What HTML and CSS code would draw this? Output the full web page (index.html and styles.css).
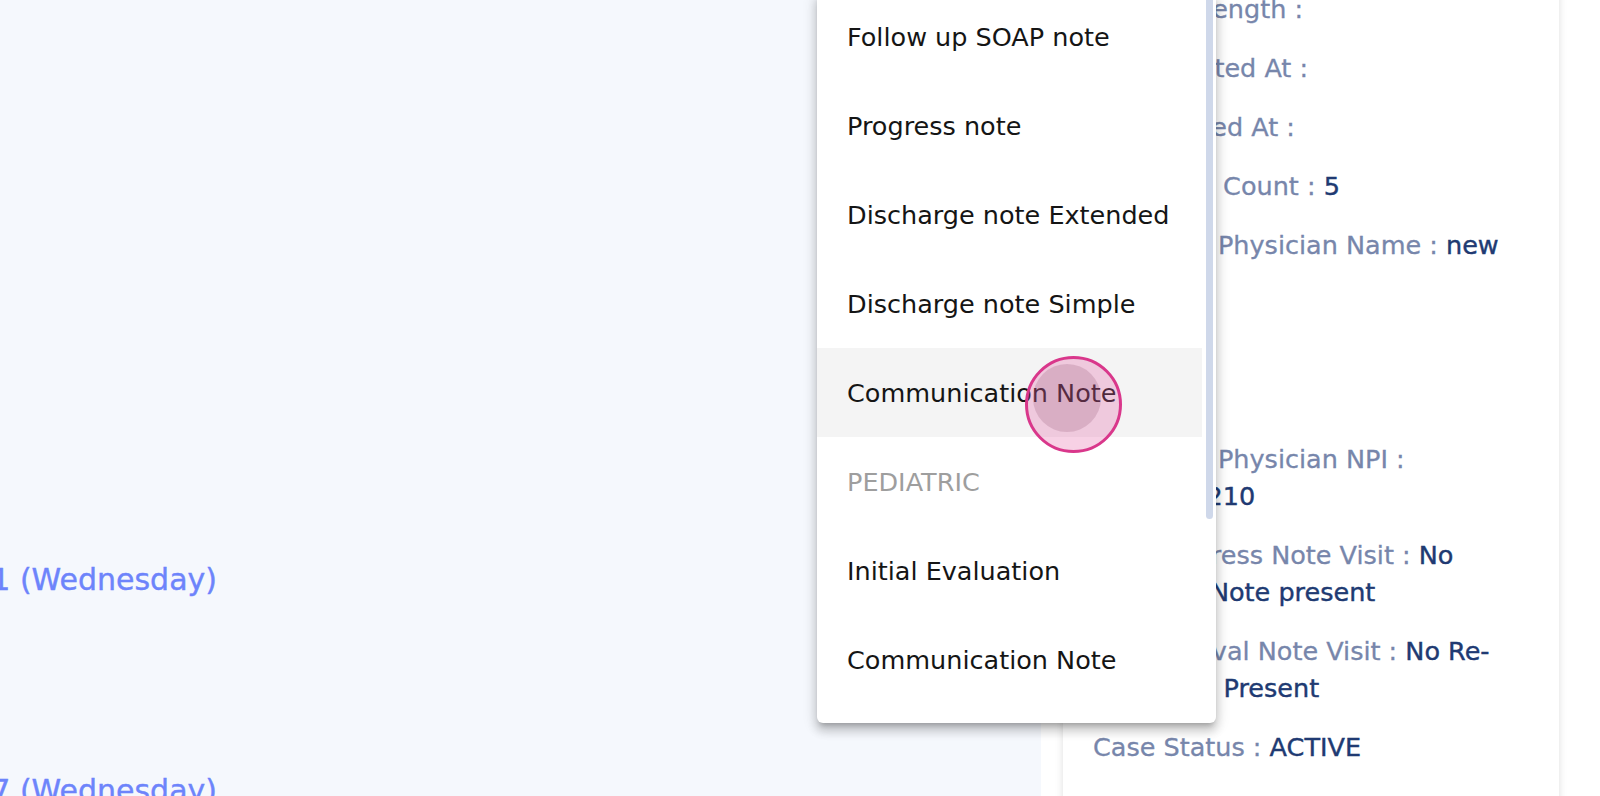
FILE: index.html
```html
<!DOCTYPE html>
<html lang="en">
<head>
<meta charset="utf-8">
<title>Patient case</title>
<link rel="stylesheet" href="styles.css">
</head>
<body>
  <main class="main">
    <div class="day-list">
      <div class="day"><div class="day-date"><span>2024-07-31 (Wednesday)</span></div></div>
      <div class="day"><div class="day-date"><span>2024-08-07 (Wednesday)</span></div></div>
    </div>
  </main>

  <aside class="aside">
    <section class="card">
      <p class="field"><span class="label">Session Length : </span><span class="value"></span></p>
      <p class="field"><span class="label">Plan Created At : </span><span class="value"></span></p>
      <p class="field"><span class="label">Pt. Updated At : </span><span class="value"></span></p>
      <p class="field"><span class="label">Total Visit Count : </span><span class="value">5</span></p>
      <p class="field"><span class="label">Referring Physician Name : </span><span class="value">new doctor</span></p>
      <p class="field"><span class="label">Age : </span><span class="value">34</span></p>
      <p class="field"><span class="label">Sex : </span><span class="value">M</span></p>
      <p class="field"><span class="label">Referring Physician NPI : </span><span class="value">1234567210</span></p>
      <p class="field"><span class="label">Last Progress Note Visit : </span><span class="value">No Progress Note present</span></p>
      <p class="field"><span class="label">Last Re-Eval Note Visit : </span><span class="value">No Re-Eval Note Present</span></p>
      <p class="field"><span class="label">Case Status : </span><span class="value">ACTIVE</span></p>
    </section>
  </aside>

  <div class="menu">
    <ul class="menu-list">
      <li class="menu-item">Follow up SOAP note</li>
      <li class="menu-item">Progress note</li>
      <li class="menu-item">Discharge note Extended</li>
      <li class="menu-item">Discharge note Simple</li>
      <li class="menu-item is-hover">Communication Note</li>
      <li class="menu-item menu-group">Pediatric</li>
      <li class="menu-item">Initial Evaluation</li>
      <li class="menu-item">Communication Note</li>
    </ul>
    <div class="thumb"></div>
  </div>

  <div class="touch"></div>
</body>
</html>
```

FILE: styles.css
```css
html, body {
  margin: 0;
  padding: 0;
}

body {
  position: relative;
  display: flex;
  height: 796px;
  overflow: hidden;
  background: #ffffff;
  font-family: "DejaVu Sans", "Noto Sans", sans-serif;
}

/* left schedule area */
.main {
  width: 1041px;
  flex: none;
  background: #f5f8fd;
}

.day-list {
  padding-top: 560px;
}

.day {
  height: 211px;
}

.day-date {
  display: flex;
  justify-content: flex-end;
  width: 217px;
  height: 40px;
  line-height: 40px;
  white-space: nowrap;
  font-size: 30px;
  color: #6d84fb;
  -webkit-text-stroke: 0.4px #6d84fb;
}

/* right details */
.aside {
  flex: 1;
  padding: 0 41px 0 22px;
}

.card {
  margin-top: -39px;
  padding: 30px;
  background: #ffffff;
  box-shadow: 0 0 8px rgba(0, 0, 0, 0.13);
  font-size: 25.5px;
  line-height: 37px;
}

.field {
  margin: 0 0 22px;
}

.label {
  color: #7786ab;
  -webkit-text-stroke: 0.3px #7786ab;
}

.value {
  color: #203a72;
  -webkit-text-stroke: 0.4px #203a72;
}

/* dropdown menu overlay */
.menu {
  position: absolute;
  left: 817px;
  top: -8px;
  width: 399px;
  padding-bottom: 19px;
  background: #ffffff;
  border-radius: 6px;
  box-shadow: 0 5px 5px -3px rgba(0, 0, 0, 0.2),
              0 8px 10px 1px rgba(0, 0, 0, 0.14),
              0 3px 14px 2px rgba(0, 0, 0, 0.12);
}

.menu-list {
  width: 385px;
  margin: 0;
  padding: 0;
  list-style: none;
}

.menu-item {
  display: flex;
  align-items: center;
  height: 89px;
  padding-left: 30px;
  font-size: 25.5px;
  color: #151515;
}

.menu-item.is-hover {
  background: #f4f4f4;
}

.menu-group {
  color: #9e9e9e;
  text-transform: uppercase;
}

.thumb {
  position: absolute;
  top: 0;
  right: 3px;
  width: 7px;
  height: 527px;
  border-radius: 0 0 4px 4px;
  background: #cfd8ea;
}

/* touch indicator */
.touch {
  position: absolute;
  left: 1025px;
  top: 356px;
  width: 97px;
  height: 97px;
  box-sizing: border-box;
  border: 3px solid #d9378b;
  border-radius: 50%;
  background: rgba(226, 90, 160, 0.28);
}

.touch::after {
  content: "";
  position: absolute;
  left: 5px;
  top: 5px;
  width: 68px;
  height: 68px;
  border-radius: 50%;
  background: rgba(120, 60, 90, 0.19);
}
```
